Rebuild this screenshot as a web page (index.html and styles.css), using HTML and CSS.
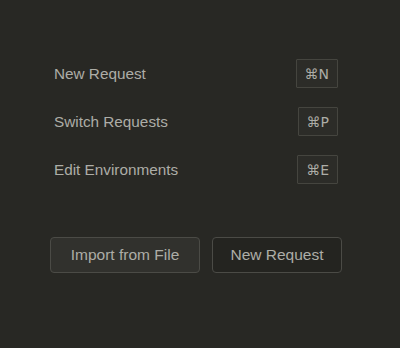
FILE: index.html
```html
<!DOCTYPE html>
<html lang="en">
<head>
    <meta charset="UTF-8">
    <meta name="viewport" content="width=device-width, initial-scale=1.0">
    <title>Requests</title>
    <link rel="stylesheet" href="styles.css">
</head>
<body>
    <div class="empty-pane">
        <div class="shortcuts">
            <div class="shortcut-row">
                <span class="shortcut-label">New Request</span>
                <kbd class="key">⌘N</kbd>
            </div>
            <div class="shortcut-row">
                <span class="shortcut-label">Switch Requests</span>
                <kbd class="key">⌘P</kbd>
            </div>
            <div class="shortcut-row">
                <span class="shortcut-label">Edit Environments</span>
                <kbd class="key">⌘E</kbd>
            </div>
        </div>
        <div class="actions">
            <button class="btn btn-import">Import from File</button>
            <button class="btn btn-new">New Request</button>
        </div>
    </div>
</body>
</html>
```

FILE: styles.css
```css
html, body {
    margin: 0;
    height: 100%;
    background-color: #282824;
}
body {
    font-family: "Liberation Sans", "Noto Sans", sans-serif;
    color: #adada7;
}
.empty-pane {
    padding: 59px 0 0 50px;
}
.shortcuts {
    display: flex;
    flex-direction: column;
    gap: 19px;
    width: 288px;
    padding-left: 4px;
    box-sizing: border-box;
}
.shortcut-row {
    display: flex;
    align-items: center;
    justify-content: space-between;
    height: 29px;
}
.shortcut-label {
    font-size: 15.3px;
}
.key {
    box-sizing: border-box;
    height: 29px;
    display: flex;
    align-items: center;
    padding: 0 8px;
    font-family: "DejaVu Sans", "Liberation Sans", sans-serif;
    font-size: 14px;
    color: #adada7;
    background-color: #2c2c28;
    border: 1px solid #45453f;
    border-radius: 1px;
}
.actions {
    display: flex;
    gap: 12px;
    margin-top: 53px;
}
.btn {
    box-sizing: border-box;
    flex-shrink: 0;
    height: 36px;
    padding: 0;
    font-family: "Liberation Sans", "Noto Sans", sans-serif;
    font-size: 15.5px;
    color: #adada7;
    border: 1px solid #4b4b46;
    border-radius: 4px;
}
.btn-import {
    width: 150px;
    background-color: #31312d;
}
.btn-new {
    width: 130px;
    background-color: #242420;
}
```
